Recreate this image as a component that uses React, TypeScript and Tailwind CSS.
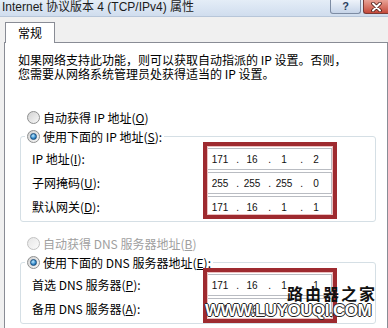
import React from "react";

type Parts = [string, string, string, string];

function Radio({ checked = false, disabled = false }: { checked?: boolean; disabled?: boolean }) {
  return (
    <span
      className={
        "flex w-[13px] h-[13px] shrink-0 items-center justify-center rounded-full border " +
        (disabled
          ? "border-[#c2c2c2] bg-linear-to-br from-[#e6e6e6] to-[#fbfbfb]"
          : "border-[#8e8f8f] bg-linear-to-br from-[#d2d2d2] to-[#f8f8f8]")
      }
    >
      {checked && (
        <span className="w-[7px] h-[7px] rounded-full border border-[#1b4f7e] bg-[radial-gradient(circle_at_40%_35%,#bfeaff,#2f86c8_60%,#124a7a)]" />
      )}
    </span>
  );
}

function IpField({ parts }: { parts: Parts }) {
  return (
    <div className="flex h-[22px] w-[125px] items-center border border-[#b9bcc2] bg-white font-['Liberation_Sans',sans-serif] text-[10px] text-[#111]">
      {parts.map((p, i) => (
        <React.Fragment key={i}>
          <span className="w-[24px] text-center">{p}</span>
          {i < 3 && <span className="w-[8px] pr-[1px] text-right">.</span>}
        </React.Fragment>
      ))}
    </div>
  );
}

function Row({ children }: { children: React.ReactNode }) {
  return <div className="flex h-[22px] items-center whitespace-nowrap">{children}</div>;
}

function GroupBox({
  legend,
  labels,
  values,
  boxBottom,
}: {
  legend: React.ReactNode;
  labels: React.ReactNode[];
  values: Parts[];
  boxBottom: string;
}) {
  return (
    <fieldset className="ml-[15px] w-[356px] rounded-[3px] border border-[#d5dfe5] px-[11px] pb-[3px]">
      <legend className="-ml-[7px] flex h-[19px] items-center gap-[3px] px-[2px] whitespace-nowrap">
        <Radio checked />
        <span>{legend}</span>
      </legend>
      <div className="flex pt-[2px]">
        <div className="flex w-[175px] flex-col gap-[2px]">
          {labels.map((l, i) => (
            <Row key={i}>{l}</Row>
          ))}
        </div>
        <div className="relative flex flex-col gap-[2px]">
          {values.map((v, i) => (
            <IpField key={i} parts={v} />
          ))}
          {/* 红框标注 */}
          <div className={"pointer-events-none absolute -left-[4px] -right-[5px] -top-[6px] border-[4px] border-[#9e2a2f] shadow-[inset_0_0_0_1px_#ecc0c0] " + boxBottom} />
        </div>
      </div>
    </fieldset>
  );
}

export default function App() {
  return (
    <div className="relative h-[328px] w-[388px] overflow-hidden bg-[#f0f0f0] font-['Noto_Sans_CJK_SC',sans-serif] text-[12px] text-black">
      {/* 标题栏 */}
      <div className="flex h-[17px] justify-between border-b border-[#b7c6d9] bg-linear-to-b from-[#e4edf7] to-[#d0ddee]">
        <div className="-mt-[1px] pl-[2px] font-['Liberation_Sans','Noto_Sans_CJK_SC',sans-serif] text-[12px] leading-[16px] whitespace-nowrap text-[#1b1b1b]">
          Internet 协议版本 4 (TCP/IPv4) 属性
        </div>
        <div className="flex gap-[2px]">
          <div className="flex h-[14px] w-[31px] items-center justify-center rounded-b-[3px] border border-t-0 border-[#7d8ca3] bg-linear-to-b from-[#eef3fa] to-[#c6d4e8] font-['Liberation_Sans',sans-serif] text-[11px] font-bold leading-none text-[#2a3f5e]">
            ?
          </div>
          <div className="flex h-[14px] w-[25px] items-center justify-center rounded-bl-[3px] border border-t-0 border-r-0 border-[#7a3a35] bg-linear-to-b from-[#e8a296] to-[#c4483a]">
            <svg width="11" height="10" viewBox="0 0 11 10">
              <path d="M2 1.5 L9 8.5 M9 1.5 L2 8.5" stroke="#4a1c18" strokeWidth="3.6" strokeLinecap="round" />
              <path d="M2 1.5 L9 8.5 M9 1.5 L2 8.5" stroke="#ffffff" strokeWidth="2" strokeLinecap="round" />
            </svg>
          </div>
        </div>
      </div>

      {/* 选项卡 */}
      <div className="flex h-[25px] items-end pl-[5px]">
        <div className="relative z-10 -mb-px flex h-[21px] w-[50px] items-center justify-center border border-b-0 border-[#898c95] bg-white pb-[1px]">
          常规
        </div>
      </div>

      <div className="ml-[4px] h-[290px] w-[384px] border border-[#898c95] bg-white">
        <div className="pl-[13px] pt-[10px] leading-[14px] whitespace-nowrap">
          <div>如果网络支持此功能，则可以获取自动指派的 IP 设置。否则，</div>
          <div>您需要从网络系统管理员处获得适当的 IP 设置。</div>
        </div>

        <div className="mt-[27px] flex h-[19px] items-center gap-[3px] pl-[22px]">
          <Radio />
          <span>
            自动获得 IP 地址(<u>O</u>)
          </span>
        </div>

        <GroupBox
          legend={
            <>
              使用下面的 IP 地址(<u>S</u>):
            </>
          }
          labels={[
            <>
              IP 地址(<u>I</u>):
            </>,
            <>
              子网掩码(<u>U</u>):
            </>,
            <>
              默认网关(<u>D</u>):
            </>,
          ]}
          values={[
            ["171", "16", "1", "2"],
            ["255", "255", "255", "0"],
            ["171", "16", "1", "1"],
          ]}
          boxBottom="-bottom-[1px]"
        />

        <div className="mt-[12px] flex h-[19px] items-center gap-[3px] pl-[22px] text-[#a0a0a0]">
          <Radio disabled />
          <span>
            自动获得 DNS 服务器地址(<u>B</u>)
          </span>
        </div>

        <GroupBox
          legend={
            <>
              使用下面的 DNS 服务器地址(<u>E</u>):
            </>
          }
          labels={[
            <>
              首选 DNS 服务器(<u>P</u>):
            </>,
            <>
              备用 DNS 服务器(<u>A</u>):
            </>,
          ]}
          values={[
            ["171", "16", "1", "1"],
            ["171", "16", "1", "1"],
          ]}
          boxBottom="-bottom-[3px]"
        />
      </div>

      {/* 水印 */}
      <div className="absolute left-[287px] top-[285px] text-[16px] font-bold leading-none tracking-[2px] text-[#111] whitespace-nowrap">
        路由器之家
      </div>
      <div className="absolute left-[205px] top-[301px] w-[170px] font-['Liberation_Sans',sans-serif] text-[17px] font-black leading-[19px] tracking-[-0.5px] text-white whitespace-nowrap [text-shadow:1px_0_0_#222,-1px_0_0_#222,0_1px_0_#222,0_-1px_0_#222]">
        WWW.LUYOUQI.COM
      </div>
    </div>
  );
}
